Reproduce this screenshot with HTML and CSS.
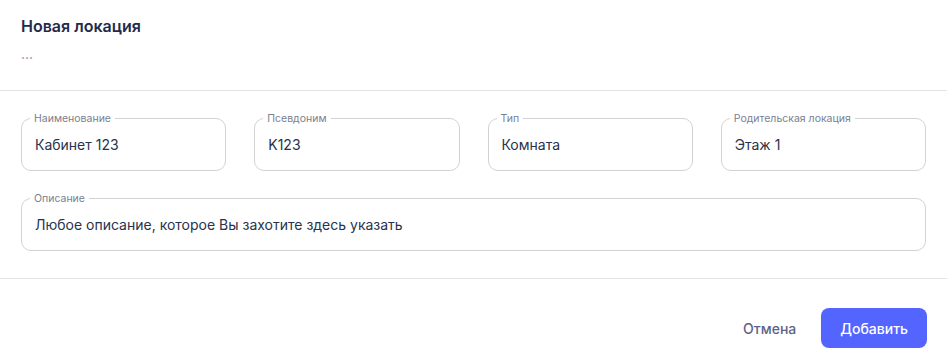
FILE: index.html
```html
<!DOCTYPE html>
<html lang="ru">
<head>
    <meta charset="UTF-8">
    <meta name="viewport" content="width=device-width, initial-scale=1.0">
    <title>Новая локация</title>
    <link rel="stylesheet" href="styles.css">
</head>
<body>
<div class="modal">
    <div class="modal-header">
        <h2 class="title">Новая локация</h2>
        <div class="subtitle">...</div>
    </div>
    <div class="modal-body">
        <div class="row row-4">
            <fieldset class="field">
                <legend>Наименование</legend>
                <input type="text" value="Кабинет 123">
            </fieldset>
            <fieldset class="field">
                <legend>Псевдоним</legend>
                <input type="text" value="K123">
            </fieldset>
            <fieldset class="field">
                <legend>Тип</legend>
                <input type="text" value="Комната">
            </fieldset>
            <fieldset class="field">
                <legend>Родительская локация</legend>
                <input type="text" value="Этаж 1">
            </fieldset>
        </div>
        <div class="row">
            <fieldset class="field">
                <legend>Описание</legend>
                <input type="text" value="Любое описание, которое Вы захотите здесь указать">
            </fieldset>
        </div>
    </div>
    <div class="modal-footer">
        <button class="btn btn-text">Отмена</button>
        <button class="btn btn-primary">Добавить</button>
    </div>
</div>
</body>
</html>
```

FILE: styles.css
```css
body {
    margin: 0;
    font-family: Inter, "Noto Sans", sans-serif;
    background: #fff;
    color: #28324d;
}
.modal {
    width: 947px;
    height: 361px;
    overflow: hidden;
}
.modal-header {
    height: 91px;
    box-sizing: border-box;
    padding: 14px 21px 0;
    border-bottom: 1px solid #e3e3e3;
}
.title {
    margin: 0;
    font-size: 16px;
    line-height: 24px;
    font-weight: 600;
    color: #1f2b4b;
}
.subtitle {
    margin-top: 7px;
    font-size: 14px;
    line-height: 18px;
    color: #8a8f9c;
}
.modal-body {
    height: 188px;
    box-sizing: border-box;
    padding: 21px 21px 0;
    border-bottom: 1px solid #e3e3e3;
}
.row {
    display: grid;
    grid-template-columns: 1fr;
    gap: 28px;
    margin-bottom: 21px;
}
.row-4 {
    grid-template-columns: repeat(4, 1fr);
}
.field {
    margin: 0;
    min-width: 0;
    padding: 0 13px;
    border: 1px solid #d2d2d4;
    border-radius: 10px;
}
.field legend {
    padding: 0 4px;
    margin-left: -5px;
    font-size: 10.5px;
    line-height: 13px;
    color: #7b8090;
}
.field input {
    width: 100%;
    box-sizing: border-box;
    border: 0;
    outline: none;
    padding: 0;
    height: 51px;
    margin-top: -6px;
    font-family: inherit;
    font-size: 14px;
    color: #28324d;
    background: transparent;
}
.modal-footer {
    display: flex;
    justify-content: flex-end;
    align-items: center;
    gap: 25px;
    padding: 29px 20px 0;
}
.btn {
    font-family: inherit;
    font-size: 14px;
    font-weight: 500;
    border: 0;
    cursor: pointer;
}
.btn-text {
    background: none;
    color: #5d6387;
    padding: 0;
}
.btn-primary {
    background: #5465ff;
    color: #fff;
    border-radius: 8px;
    height: 40px;
    padding: 0 19px;
}
```
